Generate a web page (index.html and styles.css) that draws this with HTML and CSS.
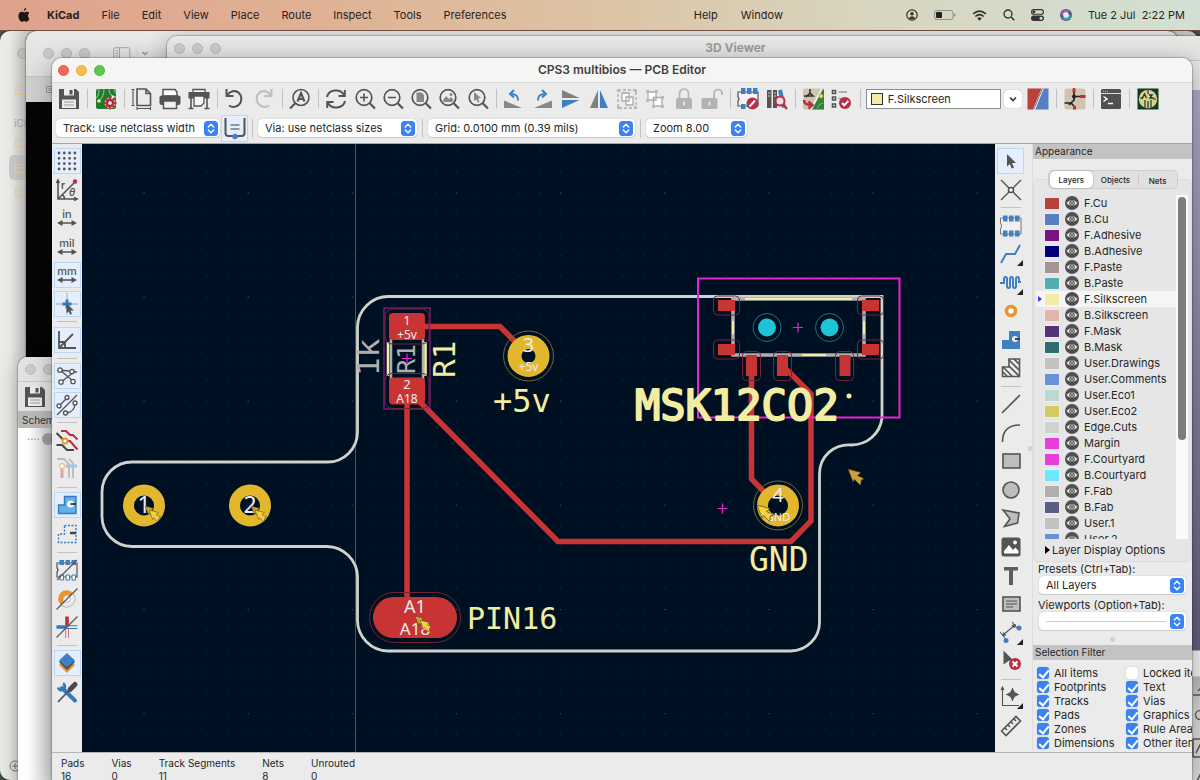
FILE: index.html
```html
<!DOCTYPE html>
<html lang="en">
<head>
<meta charset="utf-8">
<title>CPS3 multibios — PCB Editor</title>
<link rel="stylesheet" href="styles.css">
</head>
<body>
<svg class="defs" aria-hidden="true">
  <symbol id="eye" viewBox="0 0 14 14"><circle cx="7" cy="7" r="7" fill="#4f4f4f"/><path d="M1.500 7Q7 .8 12.500 7Q7 13.200 1.500 7z" fill="#e8e8e8"/><circle cx="7" cy="7" r="2.500" fill="#a9a9a9" stroke="#4f4f4f" stroke-width=".8"/><circle cx="7" cy="7" r=".9" fill="#555"/></symbol>
  <symbol id="updown" viewBox="0 0 14 15"><rect width="14" height="15" rx="3.500" fill="#3a82f6"/><path d="M4.300 6L7 3.300L9.700 6M4.300 9L7 11.700L9.700 9" fill="none" stroke="#fff" stroke-width="1.400" stroke-linecap="round" stroke-linejoin="round"/></symbol>
  <symbol id="lens" viewBox="0 0 24 24"><circle cx="11" cy="10.500" r="7.800" fill="none" stroke="#545454" stroke-width="1.700"/><path d="M16.500 16L22 21.500" stroke="#545454" stroke-width="2.200"/></symbol>
  <symbol id="floppy" viewBox="0 0 24 24"><path d="M2 2H19L22 5V22H2z" fill="#545454"/><path d="M7 2H17V8.500H7zM5 12.500H19V21H5z" fill="#ececec"/><path d="M12.500 3H15.500V7.500H12.500z" fill="#545454"/><path d="M7 15H17M7 18H17" stroke="#9a9a9a"/></symbol>
  <symbol id="folder" viewBox="0 0 12 10"><path d="M.5 1.500H4.500L5.500 2.500H11.500V9.500H.5zM.5 4.500H11.500" fill="none" stroke="#ecd4a0"/></symbol>
  <symbol id="span" viewBox="0 0 24 24"><path d="M5 17H19" stroke="#545454" stroke-width="1.600"/><path d="M2 17L7.500 14V20zM22 17L16.500 14V20z" fill="#545454"/></symbol>
  <symbol id="anchor" viewBox="0 0 18 18"><path d="M0 0L13 3.500L9.500 6.500L16.500 9.800L13.500 11L12.500 16.500L6.500 10.500L5 13z" fill="currentColor" stroke="#3e330f" stroke-width=".6"/></symbol>
</svg>

<header class="menubar">
  <svg class="apple" viewBox="0 0 12 14"><path d="M8.200 0C8.300 1.400 7.100 2.800 5.800 2.800C5.600 1.500 6.900.200 8.200 0zM10 7.500C10 6 11.200 5.200 11.300 5.100C10.600 4.100 9.500 3.800 8.800 3.800C7.700 3.800 6.900 4.400 6.300 4.400C5.700 4.400 4.800 3.800 3.800 3.800C2.100 3.900.400 5.200.400 8C.4 10.700 2.300 13.800 3.900 13.800C4.700 13.800 5.200 13.200 6.300 13.200C7.300 13.200 7.700 13.800 8.600 13.800C9.900 13.800 11.100 11.800 11.500 10.600C10.600 10.200 10 9.100 10 7.500z"/></svg>
  <nav class="menus">
    <a class="app" href="#">KiCad</a><a href="#">File</a><a href="#">Edit</a><a href="#">View</a><a href="#">Place</a><a href="#">Route</a><a href="#">Inspect</a><a href="#">Tools</a><a href="#">Preferences</a>
  </nav>
  <nav class="menus menus-end"><a href="#">Help</a><a href="#">Window</a></nav>
  <div class="tray">
    <svg width="12" height="12" viewBox="0 0 12 12"><circle cx="6" cy="6" r="5.200" fill="none" stroke="#333" stroke-width="1.200"/><circle cx="6" cy="4.700" r="1.800" fill="#333"/><path d="M2.800 9Q6 5.500 9.200 9Q6 11.500 2.800 9z" fill="#333"/></svg>
    <svg width="22" height="10" viewBox="0 0 22 10"><rect x=".5" y=".5" width="18.500" height="9" rx="2.500" fill="none" stroke="#8b9088"/><rect x="2" y="2" width="6" height="6" rx="1" fill="#222"/><path d="M20.500 3.500V6.500" stroke="#8b9088" stroke-width="1.500"/></svg>
    <svg width="15" height="11" viewBox="0 0 15 11"><path d="M1 4Q7.500-1.800 14 4M3.300 6.500Q7.500 2.800 11.700 6.500" fill="none" stroke="#333" stroke-width="1.600"/><path d="M5.200 8.300Q7.500 6.300 9.800 8.300L7.500 10.800z" fill="#333"/></svg>
    <svg width="12" height="12" viewBox="0 0 12 12"><circle cx="5" cy="5" r="4" fill="none" stroke="#333" stroke-width="1.300"/><path d="M8 8L11.300 11.300" stroke="#333" stroke-width="1.500"/></svg>
    <svg width="13" height="12" viewBox="0 0 13 12"><rect x=".6" y=".6" width="11.800" height="4.600" rx="2.300" fill="none" stroke="#333" stroke-width="1.100"/><circle cx="3" cy="2.900" r="1.400" fill="#333"/><rect y="6.500" width="13" height="5.500" rx="2.700" fill="#333"/><circle cx="10" cy="9.200" r="1.500" fill="#d5dfd0"/></svg>
    <svg width="12" height="12" viewBox="0 0 12 12"><circle cx="6" cy="6" r="6" fill="#4b5a8c"/><path d="M1 6A5 5 0 0 1 9 2L6 6z" fill="#c55ca8"/><path d="M2 9A5 5 0 0 0 11 6L6 6z" fill="#35a8b8"/><circle cx="6" cy="6" r="2.800" fill="#e8edf5"/></svg>
    <span class="clock">Tue 2 Jul&nbsp; 2:22 PM</span>
  </div>
</header>

<main class="desktop">
  <section class="win win-finder" aria-label="Finder">
    <span class="light"></span>
    <svg class="f1" width="12" height="10"><use href="#folder"/></svg>
    <span class="icl">iCl</span>
    <svg class="f2" width="12" height="10"><use href="#folder"/></svg>
    <span class="picked"></span>
    <svg class="f3" width="12" height="10"><use href="#folder"/></svg>
    <svg class="f4" width="12" height="10"><use href="#folder"/></svg>
    <svg class="plus" width="12" height="12" viewBox="0 0 12 12"><circle cx="6" cy="6" r="5" fill="none" stroke="#777"/><path d="M3 6H9M6 3V9" stroke="#777"/></svg>
  </section>
  <section class="win win-dark" aria-label="Terminal">
    <div class="dark-title">
      <span class="light"></span><span class="light"></span><span class="light"></span>
      <svg width="38" height="14" viewBox="0 0 38 14"><path d="M.7 13V2.500Q.7.700 2.500.700H15Q16.800.700 16.800 2.500V13M6.500.700V13M2.500 4H5M2.500 6.500H5M2.500 9H5" fill="none" stroke="#a5a5a3"/><path d="M24 0V14" stroke="#d5d5d3"/><path d="M29.500 5L32 7.500L34.500 5" fill="none" stroke="#999" stroke-width="1.400"/></svg>
    </div>
    <div class="dark-tools"><svg width="10" height="10" viewBox="0 0 10 10"><path d="M.5 1.500H9.500V7.500H.5zM3 3.500H7V5.500H3z" fill="none" stroke="#999"/></svg></div>
    <div class="dark-body"></div>
  </section>
  <section class="win win-viewer" aria-label="3D Viewer">
    <div class="viewer-title"><span class="light"></span><span class="light"></span><span class="light"></span><h2>3D Viewer</h2></div>
    <div class="viewer-tools"></div>
    <div class="viewer-body"></div>
    <div class="viewer-foot">
      <svg width="10" height="110" viewBox="0 0 10 110"><path d="M1 18H10M6 14L10 10M1 80H10M1 62V80M1 62H10M4 76L10 64M3 108L10 94" fill="none" stroke="#555" stroke-width="1.500"/><circle cx="8" cy="38" r="4.500" fill="none" stroke="#666" stroke-width="1.500"/></svg>
    </div>
  </section>
  <section class="win win-schem" aria-label="Schematic Editor">
    <div class="schem-title"><span class="light"></span><span class="light"></span></div>
    <div class="schem-tools"><svg width="24" height="24"><use href="#floppy"/></svg></div>
    <div class="schem-label">Schematic</div>
    <div class="schem-body"><span>····</span><i></i></div>
  </section>

  <section class="win editor" aria-label="PCB Editor">
    <div class="titlebar"><span class="light red"></span><span class="light amber"></span><span class="light green"></span><h1>CPS3 multibios — PCB Editor</h1></div>

    <div class="tools" role="toolbar" aria-label="Main">
      <button aria-label="Save"><svg><use href="#floppy"/></svg></button><hr>
      <button aria-label="Board setup"><svg viewBox="0 0 24 24"><rect x="2" y="2" width="20" height="20" rx="2" fill="#1e7a2c"/><path d="M5 2Q5 9 2 11M10 2Q10 12 3 14M15 2Q15 9 22 10M20 2Q20 5 22 6" fill="none" stroke="#7fb86e" stroke-width="1.300"/><circle cx="5" cy="14" r="1.800" fill="#f4e7b0"/><circle cx="19" cy="10" r="1.500" fill="#f4e7b0"/><circle cx="16" cy="16" r="5" fill="#c4304a" stroke="#fff" stroke-width=".7"/><path d="M16 9.500V22.500M9.500 16H22.500M11.500 11.500L20.500 20.500M20.500 11.500L11.500 20.500" stroke="#c4304a" stroke-width="2"/><circle cx="16" cy="16" r="2.500" fill="#e8d9cf" stroke="#7a2034"/></svg></button><hr>
      <button aria-label="Page settings"><svg viewBox="0 0 24 24" class="s"><path d="M7 2H16L20.500 6.500V18.500H7zM16 2V6.500H20.500"/><path d="M3 2V19M1.500 2.500H4.500M1.500 18.500H4.500M7 21.500H20M7 20V23M20.500 20V23" stroke-width="1.100"/></svg></button>
      <button aria-label="Print"><svg viewBox="0 0 24 24"><path d="M5 2.500H17L19 5V9H5z" fill="#fff" stroke="#545454" stroke-width="1.500"/><rect x="1.500" y="8.500" width="21" height="9.500" rx="2" class="f"/><path d="M5.500 14H18.500V21.500H5.500z" fill="#f2f2f2" stroke="#545454" stroke-width="1.500"/></svg></button>
      <button aria-label="Plot"><svg viewBox="0 0 24 24"><path d="M6 2.500H18V6H6z" fill="#fff" stroke="#545454" stroke-width="1.300"/><rect x="1.500" y="5" width="21" height="6.500" class="f"/><path d="M7 9H17V16L14 19H7z" fill="#f5f5f5" stroke="#545454" stroke-width="1.300"/><path d="M4 11V21M20 11V21M1.500 21.500H6.500M17.500 21.500H22.500" class="s"/></svg></button><hr>
      <button aria-label="Undo"><svg viewBox="0 0 24 24" class="s"><path d="M4 8.500Q7 4 12 4A8 8 0 1 1 6 18.500" stroke-width="2"/><path d="M3.500 2V9H10.500" stroke-width="2"/></svg></button>
      <button aria-label="Redo" disabled><svg viewBox="0 0 24 24" class="s pale"><path d="M20 8.500Q17 4 12 4A8 8 0 1 0 18 18.500" stroke-width="2"/><path d="M20.500 2V9H13.500" stroke-width="2"/></svg></button><hr>
      <button aria-label="Find"><svg viewBox="0 0 24 24" class="s"><circle cx="13" cy="10.500" r="8"/><path d="M7.500 16L2 21.500" stroke-width="2.200"/><path d="M9.500 14.500L13 6L16.500 14.500M10.700 12H15.300" stroke-width="2"/></svg></button><hr>
      <button aria-label="Refresh"><svg viewBox="0 0 24 24" class="s"><path d="M3 10A9 8 0 0 1 20 8M21 14A9 8 0 0 1 4 16" stroke-width="2"/><path d="M20.800 3V9H14.500M3.200 21V15H9.500" stroke-width="2"/></svg></button>
      <button aria-label="Zoom in"><svg viewBox="0 0 24 24"><use href="#lens"/><path d="M7 10.500H15M11 6.500V14.500" class="s"/></svg></button>
      <button aria-label="Zoom out"><svg viewBox="0 0 24 24"><use href="#lens"/><path d="M7 10.500H15" class="s"/></svg></button>
      <button aria-label="Zoom to fit page"><svg viewBox="0 0 24 24"><use href="#lens"/><path d="M7.500 5.500H12.500L15 8V15H7.500z" fill="#888"/></svg></button>
      <button aria-label="Zoom to objects"><svg viewBox="0 0 24 24"><use href="#lens"/><path d="M5.500 14L9 9L12 12L14 10L16.500 13L15 15H7z" fill="#888"/><circle cx="14" cy="7.500" r="1.500" fill="#888"/></svg></button>
      <button aria-label="Zoom to selection"><svg viewBox="0 0 24 24"><use href="#lens"/><path d="M8 5L15 11L12 11.500L13.500 15L11.700 15.500L10.500 12.500L8 14z" fill="#888"/></svg></button><hr>
      <button aria-label="Rotate counterclockwise"><svg viewBox="0 0 24 24"><path d="M2 13.500L20 21H2z" fill="#888"/><path d="M16 13.500Q16.500 7 9 7M12 3L8 7L12 10.500" class="b"/></svg></button>
      <button aria-label="Rotate clockwise"><svg viewBox="0 0 24 24"><path d="M22 13.500L4 21H22z" fill="#888"/><path d="M8 13.500Q7.500 7 15 7M12 3L16 7L12 10.500" class="b"/></svg></button>
      <button aria-label="Flip vertically"><svg viewBox="0 0 24 24"><path d="M3 3L20.500 11H3z" fill="#808080"/><path d="M3 13H20.500L3 21z" class="bf"/></svg></button>
      <button aria-label="Flip horizontally"><svg viewBox="0 0 24 24"><path d="M11 3V21H3z" fill="#808080"/><path d="M13 3V21H21z" class="bf"/></svg></button>
      <button aria-label="Group" disabled><svg viewBox="0 0 24 24"><path d="M3 3H21V21H3z" fill="none" stroke="#aaa" stroke-width="1.300" stroke-dasharray="3 2"/><path d="M7 6H14V14H7zM11 10H18V18H11z" fill="#fff" stroke="#aaa" stroke-width="1.300"/><path d="M2 2h3v3h-3zM19 2h3v3h-3zM2 19h3v3h-3zM19 19h3v3h-3z" fill="#bbb"/></svg></button>
      <button aria-label="Ungroup" disabled><svg viewBox="0 0 24 24"><path d="M5 5H13V13H5zM10.500 10.500H19V19H10.500z" fill="#fff" stroke="#aaa" stroke-width="1.300"/><path d="M3 3h3v3h-3zM12 3h3v3h-3zM3 12h3v3h-3zM18 9h3v3h-3zM9 18h3v3h-3zM18 18h3v3h-3z" fill="#bbb"/></svg></button>
      <button aria-label="Lock" disabled><svg viewBox="0 0 24 24"><rect x="4" y="11" width="16" height="11" rx="1.500" fill="#b3b3b3"/><path d="M7.500 11V6.500A4.500 4.500 0 0 1 16.500 6.500V11" fill="none" stroke="#b3b3b3" stroke-width="1.700"/><path d="M12 14.500V18.500" stroke="#e5e5e5" stroke-width="2"/></svg></button>
      <button aria-label="Unlock" disabled><svg viewBox="0 0 24 24"><rect x="1.500" y="11" width="16" height="11" rx="1.500" fill="#b3b3b3"/><path d="M14 11V6.500A4 4 0 0 1 22 6.500V8" fill="none" stroke="#b3b3b3" stroke-width="1.700"/><path d="M9.500 14.500V18.500" stroke="#e5e5e5" stroke-width="2"/></svg></button><hr>
      <button aria-label="Footprint editor"><svg viewBox="0 0 24 24"><path d="M2 5H22V19H2V14Q4 12 2 10z" fill="#f3f3f3" stroke="#545454" stroke-width="1.200"/><path d="M5 1h4.500v6h-4.500zM11 1h4.500v6h-4.500zM17 1h4.500v6h-4.500zM5 17h4.500v5h-4.500z" class="bf"/><circle cx="16.500" cy="16.500" r="6" fill="#b92d45"/><path d="M13.500 19.500L19 13.500" stroke="#fff" stroke-width="2"/></svg></button>
      <button aria-label="Footprint library"><svg viewBox="0 0 24 24"><path d="M2 3H6.500V21H2zM8 3H12V21H8z" class="f"/><path d="M3 6h2.500M9 6h2M3 9h2.500M9 9h2" stroke="#ccc"/><path d="M13 3.500L17 2.500L21 20L17 21z" class="bf"/><circle cx="15" cy="14" r="4.500" fill="#efdde1" stroke="#b92d45" stroke-width="2"/><path d="M18 17.500L22 22" stroke="#b92d45" stroke-width="2.500"/></svg></button><hr>
      <button aria-label="Update from schematic"><svg viewBox="0 0 24 24"><rect x="2" y="1.500" width="21" height="21" rx="2" fill="#cfc5ac"/><path d="M21 1.500Q23 1.500 23 4V22.500H10z" fill="#2f8238"/><path d="M21 1.500L10 22.500" stroke="#f1f1e5" stroke-width="2"/><path d="M16 21Q18 17 22 16" stroke="#80b870" fill="none"/><circle cx="20" cy="9" r="2" fill="#f2e0a0" stroke="#d69535"/><path d="M9 2V6L12 9H3M9 6L5 10" stroke="#333" stroke-width="1.600" fill="none"/><path d="M3 13Q3 18 10 18M7.500 14.500L11.500 18L7.500 21.500" stroke="#c02c48" stroke-width="2.500" fill="none"/></svg></button>
      <button aria-label="Design rules checker"><svg viewBox="0 0 24 24"><path d="M3.500 3.500h3v3h-3zM3.500 10h3v3h-3zM3.500 17h3v3h-3z" class="s"/><path d="M9.500 5H18M9.500 11.500H14" stroke="#999" stroke-width="1.500"/><circle cx="16" cy="16" r="6" fill="#b92d45"/><path d="M13 16L15.300 18.300L19.300 13.800" stroke="#fff" stroke-width="2" fill="none"/></svg></button><hr>
      <div class="layer-combo"><label class="layer-box"><i></i><select aria-label="Active layer"><option>F.Silkscreen</option></select></label><button class="drop" aria-label="Show layers"><svg viewBox="0 0 10 10"><path d="M2 3.500L5 6.500L8 3.500" fill="none" stroke="#333" stroke-width="1.600"/></svg></button></div>
      <button aria-label="Layer pair"><svg viewBox="0 0 24 24"><path d="M1.500 1.500H16L7 22.500H1.500z" fill="#b8413c"/><path d="M17.500 1.500H22.500V22.500H9z" fill="#587fc4"/><path d="M16.700 1.500L8 22.500" stroke="#eee" stroke-width="2"/><path d="M16.500 1.500L7.500 22.500" stroke="#444" stroke-width=".7"/></svg></button><hr>
      <button aria-label="Schematic editor"><svg viewBox="0 0 24 24"><rect x="1.500" y="1.500" width="21" height="21" rx="2" fill="#cfc5ac"/><path d="M11 1.500V13L6 18M1.500 16H8L11 19M11 9.500H17" stroke="#222" stroke-width="1.700" fill="none"/><circle cx="11" cy="9.500" r="2" fill="#222"/><path d="M9.500 1.500h3v4h-3zM17 8h5.500v3h-5.500zM10 19h3v3.500h-3z" fill="#c02c38"/></svg></button><hr>
      <button aria-label="Scripting console"><svg viewBox="0 0 24 24"><rect x="2" y="2" width="20" height="20" rx="1.500" fill="#505050"/><path d="M2 6.500H22" stroke="#ddd"/><path d="M4 4.300h5" stroke="#ccc" stroke-dasharray="1 1"/><path d="M4.500 9.500L8 12L4.500 14.500M9 16.500H14" fill="none" stroke="#fff" stroke-width="1.500"/></svg></button><hr>
      <button aria-label="Plugin"><svg viewBox="0 0 24 24"><rect x="1.500" y="1.500" width="21" height="21" fill="#103c22"/><circle cx="12" cy="12" r="9.200" fill="#ddcd91"/><path d="M9 13V21M12 14V21M15 13V21M12 3V7M4 11H7M17 12H20" stroke="#143d24" stroke-width="1.200"/><path d="M6 12L8.500 7L10.500 11M13 8H16L14 11H17.500" fill="none" stroke="#143d24" stroke-width="1.400"/></svg></button>
    </div>

    <div class="options">
      <span class="pick w-track"><select aria-label="Track width"><option>Track: use netclass width</option></select><svg><use href="#updown"/></svg></span>
      <button class="on auto" aria-label="Auto track width"><svg viewBox="0 0 24 24"><path d="M2.500 2V17Q2.500 20 5.500 20H18.500Q21.500 20 21.500 17V2" fill="none" stroke="#545454" stroke-width="2"/><path d="M7.500 9H16.500M7.500 13H16.500" stroke="#777" stroke-width="1.500"/><circle cx="12" cy="20.500" r="2.700" class="bf"/></svg></button><hr>
      <span class="pick w-via"><select aria-label="Via size"><option>Via: use netclass sizes</option></select><svg><use href="#updown"/></svg></span><hr>
      <span class="pick w-grid"><select aria-label="Grid"><option>Grid: 0.0100 mm (0.39 mils)</option></select><svg><use href="#updown"/></svg></span><hr>
      <span class="pick w-zoom"><select aria-label="Zoom"><option>Zoom 8.00</option></select><svg><use href="#updown"/></svg></span>
    </div>

    <div class="body">
      <div class="rail rail-left" role="toolbar" aria-label="Display">
        <button class="on" aria-label="Grid"><svg viewBox="0 0 24 24"><path d="M4 4H21M4 9.300H21M4 14.600H21M4 20H21" stroke="#545454" stroke-width="2.800" stroke-linecap="round" stroke-dasharray="0 5.300"/></svg></button>
        <button aria-label="Polar coordinates"><svg viewBox="0 0 24 24" class="s"><path d="M3 3V21H21M1.500 5L3 2L4.500 5M19 19.500L22 21L19 22.500M3 21L20 4M7 17Q10 18 9 21"/><circle cx="20" cy="3.500" r="1.500" fill="#b92d45" stroke="#b92d45"/><text x="6" y="11" class="glyph">r</text><text x="14" y="18" class="glyph it">θ</text></svg></button>
        <button aria-label="Inches"><svg viewBox="0 0 24 24"><text x="12" y="12" class="unit">in</text><use href="#span"/></svg></button>
        <button aria-label="Mils"><svg viewBox="0 0 24 24"><text x="12" y="12" class="unit">mil</text><use href="#span"/></svg></button>
        <button class="on" aria-label="Millimeters"><svg viewBox="0 0 24 24"><text x="12" y="12" class="unit">mm</text><use href="#span"/></svg></button>
        <button class="on" aria-label="Full crosshair"><svg viewBox="0 0 24 24"><path d="M12 1V23M1 12H23" stroke="#bbb" stroke-width="1.300"/><path d="M12 7.500V16.500M7.500 12H16.500" stroke="#3479bd" stroke-width="3"/><path d="M11.500 11.500L19 18.500L15.500 18.500L17 22L15 22.500L13.700 19.500L11.500 21z" class="f"/></svg></button><hr>
        <button class="on" aria-label="45 degree mode"><svg viewBox="0 0 24 24" class="s"><path d="M4 3V20H21M4 20L18 6M10 20V14H4" stroke-width="1.800"/></svg></button><hr>
        <button class="on" aria-label="Ratsnest"><svg viewBox="0 0 24 24" class="s"><path d="M5 6L22 8M19 8L6 18M5 6L18 17" stroke-width="1.300"/><g fill="#fff" stroke-width="1.300"><circle cx="5" cy="6" r="2.200"/><circle cx="17" cy="7.500" r="2.200"/><circle cx="6" cy="18" r="2.200"/><circle cx="18" cy="17.500" r="2.200"/></g></svg></button>
        <button class="on" aria-label="Curved ratsnest"><svg viewBox="0 0 24 24" class="s"><path d="M2 22L22 2M4 13L12 5M11 20Q20 19 20 10" stroke-width="1.300"/><g fill="#fff" stroke-width="1.300"><circle cx="4" cy="13" r="2"/><circle cx="12" cy="4.500" r="2"/><circle cx="20" cy="10" r="2"/><circle cx="10.500" cy="20" r="2"/></g></svg></button><hr>
        <button aria-label="Highlight nets"><svg viewBox="0 0 24 24"><path d="M1.500 4L9 11.500M1.500 16H7L12 21H19" fill="none" stroke="#444" stroke-width="2"/><path d="M6 2H11L15 6H18L22.500 10.500M11 12H15L22.500 20.500" fill="none" stroke="#b92d45" stroke-width="2"/><circle cx="10" cy="12" r="2.500" fill="#fff" stroke="#e8952c" stroke-width="1.800"/></svg></button>
        <button aria-label="Net colours"><svg viewBox="0 0 24 24"><path d="M2 2H9L14 7V21M14 2L18 6V21" fill="none" stroke="#bbb" stroke-width="1.800"/><path d="M11 9H22" stroke="#9fc5e4" stroke-width="3"/><path d="M7 10V21" stroke="#dfa2ad" stroke-width="3"/><circle cx="7" cy="9" r="2.500" fill="#fff" stroke="#f0c993" stroke-width="1.700"/></svg></button><hr>
        <button class="on" aria-label="Filled zones"><svg viewBox="0 0 24 24"><path d="M9.500 3.500H21V20.500H3.500V12H9.500z" fill="#62b1e8" stroke="#3479bd" stroke-width="1.400"/><circle cx="15.500" cy="11" r="3.500" fill="#fff"/><path d="M15.500 11H21" stroke="#444" stroke-width="2"/></svg></button>
        <button aria-label="Zone outlines"><svg viewBox="0 0 24 24"><path d="M9.500 3.500H21V20.500H3.500V12H9.500z" fill="none" stroke="#3479bd" stroke-width="1.400" stroke-dasharray="2 1.500"/><path d="M15 11H21" stroke="#444" stroke-width="2.500"/></svg></button><hr>
        <button aria-label="Pads outline"><svg viewBox="0 0 24 24"><path d="M2 5H22V19H2V14Q4 12 2 10z" fill="none" stroke="#545454" stroke-width="1.200"/><path d="M4.500 2h4.500v5h-4.500zM10.500 2h4.500v5h-4.500zM16.500 2h4.500v5h-4.500z" class="bf"/><path d="M5 17h3.500v5h-3.500zM11 17h3.500v5h-3.500zM17 17h3.500v5h-3.500z" fill="#fff" stroke="#3479bd"/><path d="M2 22L22 2" class="s thin"/></svg></button>
        <button aria-label="Vias outline"><svg viewBox="0 0 24 24"><path d="M6 18A8.500 8.500 0 1 1 18 6L14.500 9.500A4 4 0 0 0 9 15z" fill="#e8952c"/><path d="M18 6A8.500 8.500 0 0 1 6 18" fill="none" stroke="#c4c4c4" stroke-width="1.300"/><circle cx="12" cy="12" r="3.500" fill="#eee" stroke="#c4c4c4"/><path d="M1.500 22.500L22.500 1.500" class="s thin"/></svg></button>
        <button aria-label="Tracks outline"><svg viewBox="0 0 24 24"><path d="M12 1.500V12" stroke="#b92d45" stroke-width="3.500"/><path d="M10.700 13V23M13.500 13V23" stroke="#cf7685"/><path d="M1.500 12H12" stroke="#3479bd" stroke-width="3.500"/><path d="M12 10.700H22.500M12 13.500H22.500" stroke="#3479bd"/><path d="M1.500 22.500L22.500 1.500" class="s thin"/></svg></button><hr>
        <button class="on" aria-label="Appearance manager"><svg viewBox="0 0 24 24"><path d="M4 14L12 22L20 14L12 7z" fill="#e8952c"/><path d="M4 11L12 19L20 11L12 4z" fill="#4a4a4a"/><path d="M4 9.500L12 2L20 9.500L12 16.500z" fill="#3f80c2"/></svg></button>
        <button aria-label="Properties"><svg viewBox="0 0 24 24"><path d="M7 8L20 20.500" stroke="#3479bd" stroke-width="4" stroke-linecap="round"/><path d="M8 3.500A3.500 3.500 0 1 1 3 7.500" fill="none" stroke="#3479bd" stroke-width="2.700"/><path d="M3 22L14 10.500" stroke="#545454" stroke-width="1.800"/><path d="M15 9.500L20 4.500" stroke="#4a4a4a" stroke-width="5" stroke-linecap="round"/></svg></button>
      </div>

      <svg class="board" viewBox="82 144 913 608" preserveAspectRatio="xMinYMin slice" role="img" aria-label="Board layout">
        <defs><pattern id="dots" x="133.600" y="494.900" width="20.830" height="20.830" patternUnits="userSpaceOnUse"><rect x="10" y="10" width="1" height="1" fill="#22323f"/></pattern>
        <pattern id="dots5" x="133.600" y="494.900" width="104.150" height="104.150" patternUnits="userSpaceOnUse"><rect x="10" y="10" width="1" height="1" fill="#4a5965"/></pattern></defs>
        <rect x="82" y="144" width="1200" height="900" fill="#001023"/>
        <rect x="82" y="144" width="1200" height="900" fill="url(#dots)"/>
        <rect x="82" y="144" width="1200" height="900" fill="url(#dots5)"/>
        <path d="M355.500 144V900" stroke="#48545f"/>
        <path d="M389 296.500H882V418C880 434 867 445 851 445C834 444 819.500 456 819.500 474V621A29 29 0 0 1 790 651H388A31 31 0 0 1 357.500 620V577A31 31 0 0 0 327 546.500H132A30 30 0 0 1 102 516V492A30 30 0 0 1 132 462H327A30 30 0 0 0 357.500 432V327A31 31 0 0 1 389 296.500z" fill="none" stroke="#d0d2cd" stroke-width="2.800"/>
        <g fill="none" stroke="#c83434" stroke-width="5.500"><path d="M424 326.500H500L520 346.500M407 400V605M416 398L558 541.500H791L811 521V394L783 366M751.500 366V479L778 506"/></g>
        <g fill="none" stroke="#afafaf" stroke-width="3.500"><path d="M733 299H864V355H733z"/><path d="M391 335V380M423 335V380" stroke-width="2.500"/></g>
        <g stroke="#f2eda1"><path d="M388 342V376M425.500 342V376" stroke-width="2.600"/><path d="M745 299H852M802 355H826M733 321V334M864 321V334" stroke-width="2"/></g>
        <rect x="384" y="308" width="46" height="101" fill="none" stroke="#a322a0"/>
        <g fill="#c83434"><rect x="389" y="313" width="36" height="27" rx="4"/><rect x="389" y="377.500" width="36" height="27" rx="4"/><rect x="373" y="597" width="84" height="41" rx="20.500"/><path d="M718 300h17v11h-17zM718 344h17v11h-17zM862 300h17v11h-17zM862 344h17v11h-17zM746 355h11v21h-11zM777 355h11v21h-11zM839.500 355h11v21h-11z"/></g>
        <g fill="none" stroke="#742330"><rect x="385" y="309" width="44" height="35" rx="7"/><rect x="385" y="373.500" width="44" height="35" rx="7"/><rect x="369.500" y="592.500" width="91" height="50" rx="25"/><rect x="713.500" y="296" width="26" height="19" rx="4"/><rect x="713.500" y="340" width="26" height="19" rx="4"/><rect x="857.500" y="296" width="26" height="19" rx="4"/><rect x="857.500" y="340" width="26" height="19" rx="4"/><rect x="742.500" y="351.500" width="18" height="29" rx="4"/><rect x="773.500" y="351.500" width="18" height="29" rx="4"/><rect x="835.500" y="351.500" width="18" height="29" rx="4"/></g>
        <g fill="#1dc4d6"><circle cx="767" cy="327.500" r="9"/><circle cx="829.500" cy="327.500" r="9"/></g>
        <g fill="none" stroke="#147587"><circle cx="767" cy="327.500" r="14"/><circle cx="829.500" cy="327.500" r="14"/></g>
        <g fill="#001023" stroke="#e3b72d"><circle cx="144" cy="505.500" r="15.500" stroke-width="11"/><circle cx="250" cy="505.500" r="15.500" stroke-width="11"/><circle cx="528.500" cy="356" r="14" stroke-width="14"/><circle cx="778" cy="505.500" r="15.500" stroke-width="11"/></g>
        <g fill="none" stroke="#75682c"><circle cx="528.500" cy="356" r="25"/><circle cx="778" cy="505.500" r="24.500"/></g>
        <g class="netname"><text x="407" y="325" font-size="13">1</text><text x="407" y="339" font-size="12">+5v</text><text x="407" y="389" font-size="13">2</text><text x="407" y="403" font-size="12">A18</text><text x="528.500" y="352" font-size="20">3</text><text x="528.500" y="371" font-size="12">+5v</text><text x="778" y="502" font-size="20">4</text><text x="778" y="521" font-size="11">GND</text><text x="144" y="513" font-size="23">1</text><text x="250" y="513" font-size="23">2</text><text x="415" y="613" font-size="18">A1</text><text x="415" y="635" font-size="17">A18</text></g>
        <rect x="698" y="278.500" width="201.500" height="139" fill="none" stroke="#e922d5" stroke-width="2"/>
        <g class="silk"><text x="635" y="420" font-size="42" class="heavy">MSK12C<tspan class="zero">0</tspan>2</text><circle cx="849" cy="396" r="2.500"/><text x="493" y="412" font-size="32">+5v</text><text x="749" y="571" font-size="33">GND</text><text x="467" y="629" font-size="30">PIN16</text><text transform="translate(455 378) rotate(-90)" font-size="31">R1</text></g>
        <g class="fab"><text transform="translate(379 376) rotate(-90)" font-size="31">1k</text><text transform="translate(415 374) rotate(-90)" font-size="25">R1</text></g>
        <path d="M402 358.500H412M407 353.500V363.500M717.500 508.500H727.500M722.500 503.500V513.500M793 327.500H803M798 322.500V332.500" stroke="#e922d5" stroke-width="1.200"/>
        <g class="anchor"><use href="#anchor" x="848" y="469" width="18" height="18"/><use href="#anchor" x="145" y="506" width="12" height="12"/><use href="#anchor" x="251" y="506" width="12" height="12"/><use href="#anchor" x="415" y="616" width="12" height="12"/></g>
        <g class="anchor lit"><use href="#anchor" x="149" y="510" width="13" height="13"/><use href="#anchor" x="255" y="510" width="13" height="13"/><use href="#anchor" x="757" y="505" width="18" height="18"/><use href="#anchor" x="420" y="620" width="13" height="13"/></g>
      </svg>

      <div class="rail rail-right" role="toolbar" aria-label="Tools">
        <button class="on" aria-label="Select"><svg viewBox="0 0 24 24"><path d="M8 5L17 14L13 14L15 18.500L12.700 19.500L10.800 15L8 17.500z" class="f"/></svg></button>
        <button aria-label="Local ratsnest"><svg viewBox="0 0 24 24" class="s"><path d="M2 2L22 22M22 2L2 22" stroke-width="1.400"/><circle cx="12" cy="12" r="2.500" fill="#fff"/></svg></button><hr>
        <button aria-label="Place footprint"><svg viewBox="0 0 24 24"><path d="M1.500 4H22V20H1.500V15Q4 12 1.500 9z" fill="#f0f0f0" stroke="#777"/><path d="M4 1.500h4.500v6h-4.500zM10 1.500h4.500v6h-4.500zM16 1.500h4.500v6h-4.500zM4 16.500h4.500v6h-4.500zM10 16.500h4.500v6h-4.500zM16 16.500h4.500v6h-4.500z" class="bf"/></svg></button>
        <button class="more" aria-label="Route track"><svg viewBox="0 0 24 24"><path d="M2 21L7 12H16L21 3" class="b"/></svg></button>
        <button class="more" aria-label="Tune length"><svg viewBox="0 0 24 24"><path d="M1 12H5V8Q5 6 6.500 6T8 8V15Q8 17 9.500 17T11 15V8Q11 6 12.500 6T14 8V15Q14 17 15.500 17T17 15V8Q17 6 18.500 6T20 8V11H22" class="b"/></svg></button>
        <button aria-label="Via"><svg viewBox="0 0 24 24"><circle cx="12" cy="12" r="4.500" fill="#fff" stroke="#e8952c" stroke-width="3.500"/></svg></button>
        <button aria-label="Zone"><svg viewBox="0 0 24 24"><path d="M10 3H21V21H3V12H10z" class="bf"/><circle cx="16" cy="11" r="3" fill="#eee"/><path d="M16 11H21" stroke="#444" stroke-width="2"/></svg></button>
        <button aria-label="Rule area"><svg viewBox="0 0 24 24" class="s"><path d="M10 3H20.500V20.500H3.500V11H10z"/><path d="M10 4L20 14M10 10L20 20M4 11L13 20M15 3L20 8M4 16L8 20"/></svg></button><hr>
        <button aria-label="Line"><svg viewBox="0 0 24 24" class="s"><path d="M3 21L21 3"/></svg></button>
        <button aria-label="Arc"><svg viewBox="0 0 24 24" class="s"><path d="M3.500 21Q3.500 4 21 4"/></svg></button>
        <button aria-label="Rectangle"><svg viewBox="0 0 24 24" class="s"><rect x="4" y="5" width="17" height="14" fill="#bdbdbd"/></svg></button>
        <button aria-label="Circle"><svg viewBox="0 0 24 24" class="s"><circle cx="12" cy="12" r="8" fill="#bdbdbd"/></svg></button>
        <button aria-label="Polygon"><svg viewBox="0 0 24 24" class="s"><path d="M4 4L20 7L18.500 17L5.500 20.500L11 13z" fill="#bdbdbd"/></svg></button>
        <button aria-label="Image"><svg viewBox="0 0 24 24"><rect x="2.500" y="2.500" width="19" height="19" rx="2.500" class="f"/><path d="M5 18.500V16L10 10L14 15L16.500 12.500L19.500 16V18.500z" fill="#fff"/><circle cx="16" cy="7.500" r="2" fill="#fff"/></svg></button>
        <button aria-label="Text"><svg viewBox="0 0 24 24"><path d="M5 3H19V6.500H14V21H10V6.500H5z" fill="#5d5d5d"/></svg></button>
        <button aria-label="Text box"><svg viewBox="0 0 24 24" class="s"><rect x="4" y="5" width="17" height="14" fill="#bdbdbd"/><path d="M7 9H18M7 12H18M7 15H14" stroke-width="1.200"/></svg></button>
        <button class="more" aria-label="Dimension"><svg viewBox="0 0 24 24"><path d="M4 14L16 4M1 11L6 17M13 1L18 7" class="s thin"/><path d="M3 15L4.500 11L7.500 14.500zM17 3L12.500 4L15.500 7.500z" class="f"/><circle cx="20" cy="7" r="2.500" class="bf"/><circle cx="7" cy="19.500" r="2.500" class="bf"/></svg></button>
        <button aria-label="Delete"><svg viewBox="0 0 24 24"><path d="M4.500 1.500L14 11L9.500 12L4.500 15.500z" class="f"/><circle cx="16" cy="15" r="6" fill="#b92d45"/><path d="M13.500 12.500L18.500 17.500M18.500 12.500L13.500 17.500" stroke="#fff" stroke-width="2"/></svg></button><hr>
        <button class="more" aria-label="Grid origin"><svg viewBox="0 0 24 24"><path d="M3.500 2V20.500H20M2 5L3.500 2L5 5M13.500 3V16M7 9.500H20" class="s thin"/><path d="M13.500 4L15.500 7.500L19 9.500L15.500 11.500L13.500 15L11.500 11.500L8 9.500L11.500 7.500z" class="f" stroke="#545454"/></svg></button>
        <button aria-label="Measure"><svg viewBox="0 0 24 24" class="s"><path d="M2.500 17L17 2.500L21.500 7L7 21.500zM6 14L8 16M9 11L11 13M12 8L14 10M15 5L17 7"/></svg></button>
      </div>
      <div class="sash"><i></i></div>

      <aside class="side">
        <h3>Appearance</h3>
        <div class="group">
          <div class="tabs" role="tablist"><button role="tab" aria-selected="true">Layers</button><button role="tab">Objects</button><button role="tab">Nets</button></div>
          <div class="layers">
            <ul>
              <li><i style="background:#b8413c"></i><button aria-label="Toggle F.Cu"><svg><use href="#eye"/></svg></button>F.Cu</li>
              <li><i style="background:#587fc4"></i><button aria-label="Toggle B.Cu"><svg><use href="#eye"/></svg></button>B.Cu</li>
              <li><i style="background:#7a1284"></i><button aria-label="Toggle F.Adhesive"><svg><use href="#eye"/></svg></button>F.Adhesive</li>
              <li><i style="background:#000080"></i><button aria-label="Toggle B.Adhesive"><svg><use href="#eye"/></svg></button>B.Adhesive</li>
              <li><i style="background:#a39593"></i><button aria-label="Toggle F.Paste"><svg><use href="#eye"/></svg></button>F.Paste</li>
              <li><i style="background:#50adb0"></i><button aria-label="Toggle B.Paste"><svg><use href="#eye"/></svg></button>B.Paste</li>
              <li class="current"><i style="background:#f0eca8"></i><button aria-label="Toggle F.Silkscreen"><svg><use href="#eye"/></svg></button>F.Silkscreen</li>
              <li><i style="background:#e1b4ac"></i><button aria-label="Toggle B.Silkscreen"><svg><use href="#eye"/></svg></button>B.Silkscreen</li>
              <li><i style="background:#54337a"></i><button aria-label="Toggle F.Mask"><svg><use href="#eye"/></svg></button>F.Mask</li>
              <li><i style="background:#2e6d70"></i><button aria-label="Toggle B.Mask"><svg><use href="#eye"/></svg></button>B.Mask</li>
              <li><i style="background:#c2c2c2"></i><button aria-label="Toggle User.Drawings"><svg><use href="#eye"/></svg></button>User.Drawings</li>
              <li><i style="background:#6891d8"></i><button aria-label="Toggle User.Comments"><svg><use href="#eye"/></svg></button>User.Comments</li>
              <li><i style="background:#bcdad1"></i><button aria-label="Toggle User.Eco1"><svg><use href="#eye"/></svg></button>User.Eco1</li>
              <li><i style="background:#d5c963"></i><button aria-label="Toggle User.Eco2"><svg><use href="#eye"/></svg></button>User.Eco2</li>
              <li><i style="background:#d0d2cd"></i><button aria-label="Toggle Edge.Cuts"><svg><use href="#eye"/></svg></button>Edge.Cuts</li>
              <li><i style="background:#e83cdc"></i><button aria-label="Toggle Margin"><svg><use href="#eye"/></svg></button>Margin</li>
              <li><i style="background:#e83cdc"></i><button aria-label="Toggle F.Courtyard"><svg><use href="#eye"/></svg></button>F.Courtyard</li>
              <li><i style="background:#6de8ff"></i><button aria-label="Toggle B.Courtyard"><svg><use href="#eye"/></svg></button>B.Courtyard</li>
              <li><i style="background:#afafaf"></i><button aria-label="Toggle F.Fab"><svg><use href="#eye"/></svg></button>F.Fab</li>
              <li><i style="background:#5a5e85"></i><button aria-label="Toggle B.Fab"><svg><use href="#eye"/></svg></button>B.Fab</li>
              <li><i style="background:#c2c2c2"></i><button aria-label="Toggle User.1"><svg><use href="#eye"/></svg></button>User.1</li>
              <li><i style="background:#6891d8"></i><button aria-label="Toggle User.2"><svg><use href="#eye"/></svg></button>User.2</li>
            </ul>
            <div class="scroll"><i></i></div>
          </div>
          <button class="disclose"><svg viewBox="0 0 5 8"><path d="M0 0L5 4L0 8z"/></svg>Layer Display Options</button>
        </div>
        <label class="cap" for="presets">Presets (Ctrl+Tab):</label>
        <span class="pick side-pick"><select id="presets"><option>All Layers</option></select><svg><use href="#updown"/></svg></span>
        <label class="cap" for="views">Viewports (Option+Tab):</label>
        <span class="pick side-pick blank"><select id="views"><option></option></select><svg><use href="#updown"/></svg></span>
        <div class="grip"><i></i></div>
        <h3>Selection Filter</h3>
        <div class="filter">
          <label><input type="checkbox" checked>All items</label><label><input type="checkbox">Locked items</label>
          <label><input type="checkbox" checked>Footprints</label><label><input type="checkbox" checked>Text</label>
          <label><input type="checkbox" checked>Tracks</label><label><input type="checkbox" checked>Vias</label>
          <label><input type="checkbox" checked>Pads</label><label><input type="checkbox" checked>Graphics</label>
          <label><input type="checkbox" checked>Zones</label><label><input type="checkbox" checked>Rule Areas</label>
          <label><input type="checkbox" checked>Dimensions</label><label><input type="checkbox" checked>Other items</label>
        </div>
      </aside>
    </div>

    <dl class="status">
      <div><dt>Pads</dt><dd>16</dd></div><div><dt>Vias</dt><dd>0</dd></div><div><dt>Track Segments</dt><dd>11</dd></div><div><dt>Nets</dt><dd>8</dd></div><div><dt>Unrouted</dt><dd>0</dd></div>
    </dl>
  </section>
</main>
</body>
</html>
```
FILE: styles.css
```css
* { box-sizing: border-box; }
body { margin: 0; height: 100vh; overflow: hidden; display: flex; flex-direction: column; font: 11px/14px Inter, "Liberation Sans", sans-serif; color: #262626; background: #4a5a48; }
button, select, input { font: inherit; color: inherit; margin: 0; padding: 0; border: 0; background: none; appearance: none; }
button { display: grid; place-items: center; }
h1, h2, h3, ul, dl, dd { margin: 0; padding: 0; font-weight: inherit; font-size: inherit; }
i { display: block; }
.defs { position: absolute; width: 0; height: 0; }

/* Menu bar */
.menubar { flex: none; height: 31px; display: flex; align-items: center; padding: 0 15px 0 18px; background: linear-gradient(90deg, #dfa28c, #dfb496 30%, #dcc5a6 52%, #d8d5bf 72%, #d2e0d3); border-bottom: 1px solid #704b3f; }
.apple { width: 12px; height: 14px; fill: #1c1512; }
.menus { display: flex; gap: 22px; margin-left: 17px; }
.menus a { color: #2a211d; text-decoration: none; }
.menus .app { font-weight: 700; }
.menus-end { gap: 23px; margin-left: auto; margin-right: 123px; }
.tray { display: flex; align-items: center; gap: 16px; }
.clock { white-space: pre; }

/* Windows on the desktop */
.desktop { position: relative; flex: 1; overflow: hidden; }
.win { position: absolute; overflow: hidden; border-radius: 10px 10px 0 0; box-shadow: 0 0 1px 1px rgba(0,0,0,.2), 0 4px 22px rgba(0,0,0,.3); }
.light { flex: none; width: 11px; height: 11px; border-radius: 50%; background: #cacac8; border: 1px solid #b7b7b5; }
.win-finder { left: 0; right: 2px; top: 0; bottom: 0; background: linear-gradient(90deg, #ebebe9 10px, #d2d2cf 26px); border-radius: 10px; }
.win-finder > * { position: absolute; left: 15px; }
.win-finder .light { left: 17px; top: 17px; }
.f1 { top: 54px; } .f2 { top: 106px; } .f3 { top: 132px; } .f4 { top: 156px; }
.win-finder .icl { left: 14px; top: 85px; color: #aaa; font-size: 10px; }
.win-finder .picked { left: 9px; top: 124px; width: 20px; height: 25px; background: #cbcbc9; border-radius: 5px; }
.win-finder .plus { left: 9px; bottom: 8px; }
.win-dark { left: 26px; right: 22px; top: 0; bottom: 423px; background: #050505; }
.dark-title { height: 46px; display: flex; align-items: center; gap: 7px; padding-left: 17px; background: linear-gradient(#e9e9e7, #dededc); border-bottom: 1px solid #c2c2c0; }
.dark-title svg { margin-left: 16px; }
.dark-tools { height: 25px; padding: 8px 20px; background: #cfcfcd; }
.dark-tools svg { display: block; }
.win-viewer { left: 167px; right: -20px; top: 5px; bottom: -10px; background: #e4e4e2; display: flex; flex-direction: column; }
.viewer-title { height: 24px; display: flex; align-items: center; gap: 7px; padding-left: 7px; background: linear-gradient(#e7e7e5, #e2e2e0); color: #9b9b99; font-size: 12px; font-weight: 700; }
.viewer-title h2 { flex: 1; text-align: center; padding-left: 23px; }
.viewer-tools { height: 30px; background: #e6e6e6; border-top: 1px solid #c8c8c8; }
.viewer-body { flex: 1; background: linear-gradient(#a9a9c4, #5c5c78); }
.viewer-foot { height: 140px; padding: 26px 0 0 1025px; background: linear-gradient(#eee 0 25px, #b5b5b5 26px, #d8d8d8 60px); border-top: 1px solid #aaa; }
.win-schem { left: 18px; width: 200px; top: 326px; bottom: -10px; background: #fff; }
.schem-title { height: 25px; display: flex; align-items: center; gap: 7px; padding-left: 7px; background: #e2e2e2; border-bottom: 1px solid #c7c7c7; }
.schem-tools { height: 29px; padding: 3px 5px; background: #e4e4e4; }
.schem-label { height: 17px; padding: 2px 4px; background: #b9b9b9; color: #333; font-size: 10px; }
.schem-body { height: 400px; display: flex; align-items: flex-start; gap: 2px; padding: 4px 9px; background: linear-gradient(90deg, #fdfdfd 10px, #cfcfcf 34px); color: #999; }
.schem-body i { margin-top: 1px; width: 12px; height: 12px; border-radius: 50%; background: #9d9d9d; }

/* Editor window */
.editor { left: 52px; right: 8px; top: 27px; bottom: 0; display: flex; flex-direction: column; background: #ebebeb; }
.titlebar { flex: none; height: 25px; display: flex; align-items: center; gap: 7px; padding-left: 6px; background: #f5f5f3; border-bottom: 1px solid #dcdcda; }
.titlebar h1 { flex: 1; text-align: center; font-size: 12px; font-weight: 600; color: #404040; padding-right: 60px; }
.red { background: #ed6a5e; border-color: #dc5a4f; }
.amber { background: #f5bf4f; border-color: #dfaa3e; }
.green { background: #61c554; border-color: #50b244; }

.tools { flex: none; height: 31px; display: flex; align-items: center; justify-content: space-between; padding: 0 32px 0 5px; }
.tools svg, .rail svg { display: block; width: 24px; height: 24px; }
.tools hr { width: 4px; height: 19px; margin: 0; border: 0; background: linear-gradient(#c2c2c2, #c2c2c2) 2px 0 / 1px 19px no-repeat; }
.s { fill: none; stroke: #545454; stroke-width: 1.6; }
.s.pale { stroke: #bdbdbd; }
.s.thin { stroke-width: 1.1; }
.f { fill: #545454; }
.b { fill: none; stroke: #3f80c2; stroke-width: 2; }
.bf { fill: #3f80c2; }
.layer-combo { display: flex; align-items: center; gap: 3px; }
.layer-box { width: 135px; height: 20px; display: flex; align-items: center; gap: 5px; padding-left: 4px; background: #fff; border: 1px solid #8d8d8d; }
.layer-box i { width: 12px; height: 12px; background: #f0eca8; border: 1px solid #333; }
.layer-box select { flex: 1; }
.drop { width: 18px; height: 18px; background: #fff; border-radius: 4px; box-shadow: 0 0 1px rgba(0,0,0,.4); }
.tools .drop svg { width: 10px; height: 10px; }

.options { flex: none; height: 30px; display: flex; align-items: center; padding-left: 4px; padding-bottom: 1px; border-bottom: 1px solid #a5a5a5; }
.options hr { width: 1px; height: 19px; margin: 0 5px; border: 0; background: #c2c2c2; }
.pick { position: relative; display: block; height: 18px; }
.pick select { width: 100%; height: 18px; padding: 0 20px 0 7px; background: #fff; border-radius: 4px; box-shadow: 0 0 1px rgba(0,0,0,.35), 0 1px 1px rgba(0,0,0,.1); }
.pick svg { position: absolute; right: 2px; top: 2px; width: 14px; height: 15px; pointer-events: none; }
.w-track { width: 164px; } .w-via { width: 159px; } .w-grid { width: 207px; } .w-zoom { width: 101px; }
.on { background: #e4eefc; outline: 1px solid #bcd7f6; }
.auto { width: 25px; height: 25px; margin-left: 2px; }
.auto svg { width: 24px; height: 24px; }

.body { flex: none; display: flex; align-items: stretch; height: calc(100vh - 172px); }
.rail { flex: none; display: flex; flex-direction: column; align-items: center; justify-content: space-between; padding-top: 5px; }
.rail button { position: relative; width: 25px; height: 24px; }
.rail hr { width: 20px; height: 3px; margin: 0; border: 0; background: linear-gradient(#c2c2c2, #c2c2c2) 0 1px / 20px 1px no-repeat; }
.rail-left { width: 30px; padding-bottom: 48px; }
.rail-right { width: 33px; padding: 5px 2px 14px 0; }
.more::after { content: ""; position: absolute; right: 0; bottom: 0; border: 3px solid; border-color: transparent #222 #222 transparent; }
.unit { font: 500 11px Inter, sans-serif; text-anchor: middle; fill: #545454; }
.glyph { font: 600 10px Inter, sans-serif; fill: #545454; stroke: none; }
.it { font-style: italic; }
.board { flex: 1; min-width: 0; height: 100%; display: block; }
.netname { font-family: "Noto Sans", sans-serif; fill: #ededed; text-anchor: middle; }
.silk { font-family: "DejaVu Sans Mono", monospace; fill: #f2eda1; }
.heavy { stroke: #f2eda1; stroke-width: 2; stroke-linejoin: round; }
.zero { font-family: "DejaVu Sans", sans-serif; }
.fab { font-family: "DejaVu Sans Mono", monospace; fill: #afafaf; }
.anchor { color: #c9a03a; }
.lit { color: #f3d23e; }
.sash { flex: none; width: 4px; display: grid; place-items: center; }
.sash i, .grip i { width: 5px; height: 5px; border-radius: 50%; background: #d0d0d0; }

.side { flex: none; width: 160px; overflow: hidden; border-left: 1px solid #dedede; }
.side h3 { height: 15px; line-height: 14px; padding-left: 2px; background: #c3c3c3; font-size: 10px; }
.group { margin-top: 20px; padding: 0 2px; background: #e6e6e6; border: 1px solid #dcdcdc; border-radius: 5px; }
.tabs { display: flex; align-items: center; width: 130px; height: 19px; margin: -10px auto 6px 12px; padding: 1px; background: #e0e0e0; border: 1px solid #cfcfcf; border-radius: 5px; font-size: 8px; font-weight: 500; }
.tabs button { flex: 46; height: 17px; }
.tabs button:last-child { flex: 37; height: 11px; border-left: 1px solid #c9c9c9; }
.tabs [aria-selected] { flex: 43; background: #fff; border-radius: 5px; box-shadow: 0 0 2px rgba(0,0,0,.35); }
.layers { display: flex; height: 344px; overflow: hidden; }
.layers ul { flex: 1; list-style: none; }
.layers li { height: 16px; display: flex; align-items: center; padding-left: 9px; position: relative; }
.layers li i { width: 14px; height: 11px; margin-right: 6px; box-shadow: 0 0 0 1px rgba(255,255,255,.25); }
.layers li button { width: 14px; height: 14px; margin-right: 5px; }
.layers li svg { display: block; width: 14px; height: 14px; }
.current { background: #f6f6f6; }
.current::before { content: ""; position: absolute; left: 2px; border: 3px solid transparent; border-left: 4px solid #3b3bf0; border-right: 0; }
.scroll { width: 12px; margin-right: 1px; padding: 2px 2px; background: #fafafa; }
.scroll i { height: 243px; width: 8px; border-radius: 4px; background: #7d7d7d; }
.disclose { display: flex; align-items: center; gap: 2px; height: 22px; padding-left: 9px; white-space: nowrap; }
.disclose svg { width: 5px; height: 8px; }
.cap { display: block; height: 14px; padding-left: 5px; white-space: nowrap; }
.side-pick { margin: 0 6px 4px; }
.blank::after { content: ""; position: absolute; left: 7px; right: 20px; top: 9px; height: 1px; background: #ccc; }
.grip { height: 11px; display: grid; place-items: center; }
.filter { display: grid; grid-template-columns: 89px 90px; grid-auto-rows: 14px; padding: 6px 4px; }
.filter label { display: flex; align-items: center; gap: 5px; white-space: nowrap; }
.filter input { position: relative; flex: none; width: 12px; height: 12px; border-radius: 3px; background: #fff; box-shadow: 0 0 1px rgba(0,0,0,.4); }
.filter input:checked { background: #3a82f6; }
.filter input:checked::after { content: ""; position: absolute; left: 4px; top: 1px; width: 4px; height: 8px; border: solid #fff; border-width: 0 2px 2px 0; transform: rotate(40deg); }

.status { flex: none; display: flex; gap: 27px; padding: 4px 9px; border-top: 1px solid #b5b5b5; font-size: 10px; line-height: 13px; }
```
